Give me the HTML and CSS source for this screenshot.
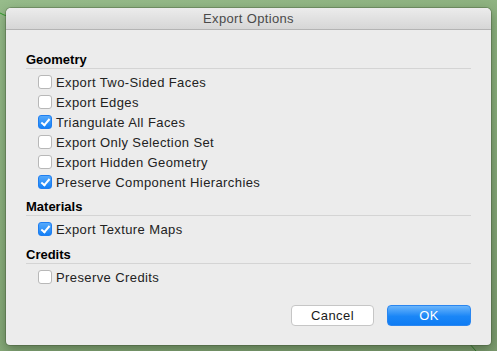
FILE: index.html
```html
<!DOCTYPE html>
<html lang="en">

<head>
    <meta charset="UTF-8" />
    <title>Export Options</title>
    <link rel="stylesheet" href="styles.css">
</head>

<body>
    <svg class="wires" width="497" height="351" viewBox="0 0 497 351">
        <path d="M0 13 L4 15 L8 16" stroke="#2f9a2a" stroke-width="1" fill="none" />
        <path d="M468 342 L476 351" stroke="#2f7a2a" stroke-width="1" fill="none" />
    </svg>

    <div class="window">
        <div class="titlebar">Export Options</div>

        <div class="content">
            <div class="group">
                <h3 class="group-title">Geometry</h3>
                <label class="option"><span class="box"></span>Export Two-Sided Faces</label>
                <label class="option"><span class="box"></span>Export Edges</label>
                <label class="option"><span class="box checked"></span>Triangulate All Faces</label>
                <label class="option"><span class="box"></span>Export Only Selection Set</label>
                <label class="option"><span class="box"></span>Export Hidden Geometry</label>
                <label class="option"><span class="box checked"></span>Preserve Component Hierarchies</label>
            </div>

            <div class="group">
                <h3 class="group-title">Materials</h3>
                <label class="option"><span class="box checked"></span>Export Texture Maps</label>
            </div>

            <div class="group group-credits">
                <h3 class="group-title">Credits</h3>
                <label class="option"><span class="box"></span>Preserve Credits</label>
            </div>

            <div class="actions">
                <button class="btn">Cancel</button>
                <button class="btn primary">OK</button>
            </div>
        </div>
    </div>
</body>

</html>
```

FILE: styles.css
```css
* {
    box-sizing: border-box;
}

body {
    margin: 0;
    width: 497px;
    height: 351px;
    overflow: hidden;
    padding: 8px 0 0 6px;
    background: linear-gradient(160deg, #97bc8b 0%, #8cb07e 45%, #7d9c70 100%);
    font-family: "Liberation Sans", Arial, sans-serif;
    font-size: 13px;
    color: #1a1a1a;
}

.wires {
    position: absolute;
    left: 0;
    top: 0;
}

.window {
    position: relative;
    width: 485px;
    height: 337px;
    background: #ececec;
    border-radius: 5px 5px 4px 4px;
    box-shadow: 0 0 0 1px rgba(60, 80, 50, 0.35), 0 4px 12px rgba(30, 50, 25, 0.45);
    display: flex;
    flex-direction: column;
    overflow: hidden;
}

.titlebar {
    height: 22px;
    line-height: 21px;
    text-align: center;
    letter-spacing: 0.35px;
    color: #4a4a4a;
    background: linear-gradient(#ececec, #d6d6d6);
    border-bottom: 1px solid #b4b4b4;
}

.content {
    flex: 1;
    display: flex;
    flex-direction: column;
    padding: 22px 20px 19px 20px;
}

.group + .group {
    margin-top: 7px;
}

.group.group-credits {
    margin-top: 8px;
}

.group-title {
    margin: 0 0 3px 0;
    font-size: 13px;
    font-weight: bold;
    color: #000;
    line-height: 16px;
    border-bottom: 1px solid #d4d4d4;
}

.option {
    display: flex;
    align-items: center;
    height: 20px;
    padding-left: 12px;
    gap: 4px;
    letter-spacing: 0.4px;
    color: #222;
}

.box {
    width: 14px;
    height: 14px;
    border: 1px solid #b8b8b8;
    border-radius: 3px;
    background: #fff;
    position: relative;
}

.box.checked {
    border-color: #1f7ef0;
    background: linear-gradient(#55a9fb, #1480f6);
}

.box.checked:after {
    content: "";
    position: absolute;
    left: 4px;
    top: 1px;
    width: 3px;
    height: 7px;
    border: solid #fff;
    border-width: 0 2px 2px 0;
    transform: rotate(40deg);
}

.actions {
    margin-top: auto;
    display: flex;
    justify-content: flex-end;
    gap: 13px;
}

.btn {
    height: 21px;
    width: 83px;
    border: 1px solid #c6c6c6;
    border-radius: 4px;
    background: #fff;
    font-family: inherit;
    font-size: 13px;
    letter-spacing: 0.4px;
    color: #1a1a1a;
    padding: 0;
}

.btn.primary {
    width: 84px;
    border-color: #2a86f0;
    background: linear-gradient(#6ab5fb, #1a86f7 55%, #0f7cf3);
    color: #fff;
}
```
